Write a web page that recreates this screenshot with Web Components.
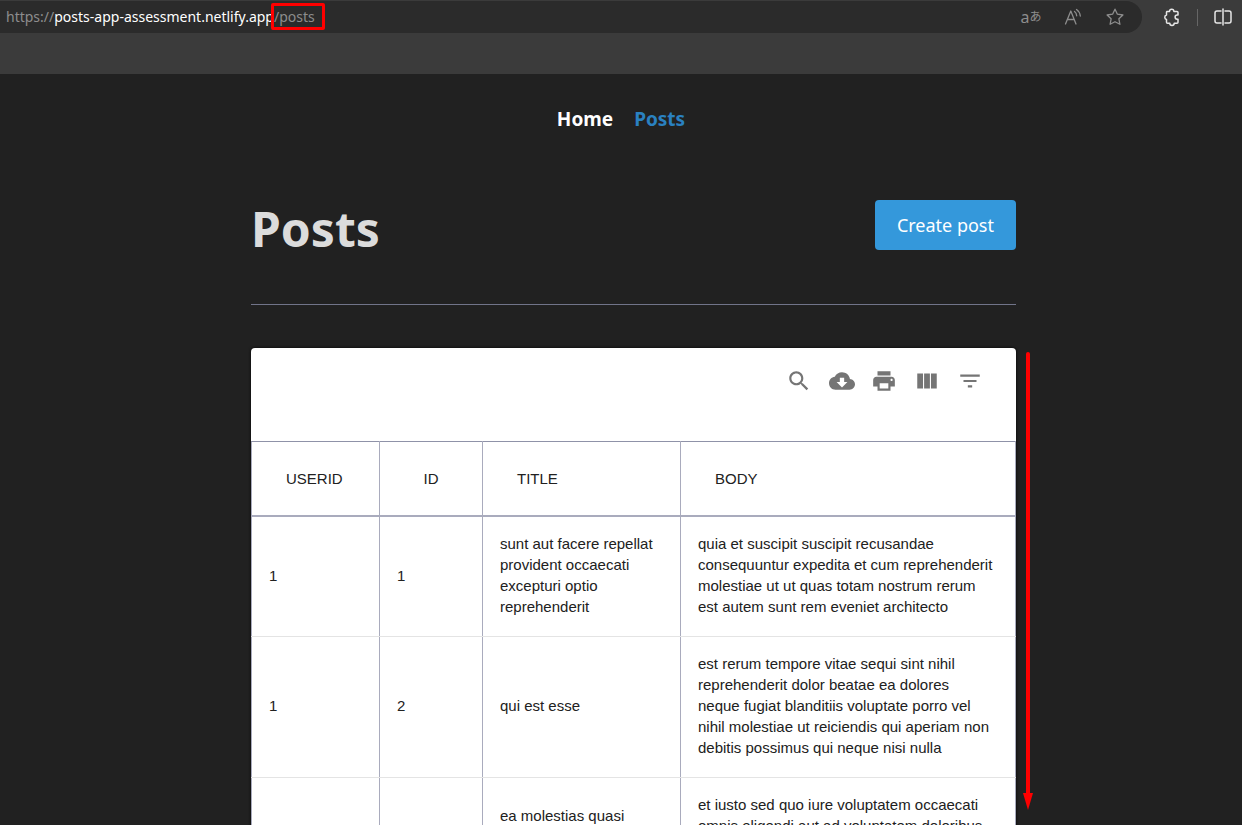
<!DOCTYPE html>
<html lang="en">
<head>
<meta charset="utf-8">
<title>Posts</title>
<style>
html{scrollbar-width:none;background:#212121}
body{margin:0;font-family:"Noto Sans",sans-serif}
</style>
</head>
<body>
<address-bar></address-bar>
<site-nav></site-nav>
<posts-page>
  <span slot="title">Posts</span>
  <span slot="action">Create post</span>
  <posts-card></posts-card>
</posts-page>

<template id="t-address">
<style>
:host{display:flex;align-items:flex-start;background:#3b3b3b;height:74px}
.field{flex:1;display:flex;align-items:center;justify-content:space-between;height:32px;margin-top:1px;padding:0 16px 0 6px;background:#2b2b2b;border-radius:0 16px 16px 0;box-sizing:border-box}
.url{font:14px/20px "Noto Sans",sans-serif;color:#8d8d8d;white-space:nowrap}
.host{color:#fff}
.path{position:relative}
.path::after{content:"";position:absolute;inset:-4px -10px -4px -3px;border:3px solid #f00;border-radius:2px}
.icons,.outer{display:flex;align-items:center}
button{display:flex;align-items:center;justify-content:center;padding:0;border:0;background:none;color:#8d8d8d;height:24px}
.icons{gap:20px}
.icons button{width:22px}
.tr{font:16px/20px "Noto Sans","Noto Sans CJK JP",sans-serif}
.tr small{font-size:12px}
.outer{width:100px;height:32px;margin-top:1px;box-sizing:border-box;padding-left:20px}
.outer button{color:#e6e6e6;width:20px}
.sep{width:1px;height:17px;background:#666;margin:0 15px}
svg{display:block;fill:none;stroke:currentColor;stroke-width:1.3;stroke-linejoin:round;stroke-linecap:round}
</style>
<div class="field">
  <div class="url">https://<span class="host">posts-app-assessment.netlify.app</span><span class="path">/posts</span></div>
  <div class="icons">
    <button class="tr" aria-label="Translate">a<small>あ</small></button>
    <button aria-label="Read aloud"><svg width="20" height="20" viewBox="0 0 20 20"><path d="M2.500 17 7.800 4 13 17M4.300 12.500h7M11.500 4.500q2 1.500 2.200 4.300M13.500 2.500q3.300 2.200 3.800 6.500"/></svg></button>
    <button aria-label="Favourite"><svg width="20" height="20" viewBox="0 0 20 20"><path d="M10 2.200 12.400 7.200 17.900 8 13.900 11.800 14.900 17.300 10 14.700 5.100 17.300 6.100 11.800 2.100 8 7.600 7.200Z"/></svg></button>
  </div>
</div>
<div class="outer">
  <button aria-label="Extensions"><svg width="20" height="20" viewBox="0 0 20 20" style="stroke-width:1.500"><path d="M5 4.500H7.500a2.200 2.200 0 0 1 4.400 0H15a1 1 0 0 1 1 1V8h-.8a2 2 0 0 0 0 4.200h.8v3a1 1 0 0 1-1 1H12.200a2.200 2.200 0 0 1-4.400 0H5.500a1 1 0 0 1-1-1V12.400a2.200 2.200 0 0 1 0-4.300V5.500a1 1 0 0 1 .5-1Z"/></svg></button>
  <span class="sep"></span>
  <button aria-label="Split screen"><svg width="20" height="20" viewBox="0 0 20 20" style="stroke-width:1.500"><path d="M8 4H4a2 2 0 0 0-2 2v8a2 2 0 0 0 2 2h4M10 2v16M12 4h4a2 2 0 0 1 2 2v8a2 2 0 0 1-2 2h-4"/></svg></button>
</div>
</template>

<template id="t-nav">
<style>
:host{display:block;padding:30px 0}
nav{display:flex;justify-content:center;gap:21px;font-size:19px;line-height:30px;font-weight:700}
a{color:#fff;text-decoration:none}
a[aria-current]{color:#2a81c1}
</style>
<nav><a href="#home">Home</a><a href="#posts" aria-current="page">Posts</a></nav>
</template>

<template id="t-page">
<style>
:host{display:block;padding:36px 226px 0 251px}
header{display:flex;justify-content:space-between;align-items:flex-start;height:104px;border-bottom:1px solid #717489;margin-bottom:43px}
h1{margin:0;font-size:48px;line-height:58px;font-weight:700;color:#dcdcdc}
button{font:18px/26px "Noto Sans",sans-serif;color:#fff;background:#3498db;border:0;border-radius:4px;padding:12px 22px;white-space:nowrap}
</style>
<main>
<header><h1><slot name="title"></slot></h1><button><slot name="action"></slot></button></header>
<slot></slot>
</main>
</template>

<template id="t-toolbar">
<style>
:host{display:flex;justify-content:flex-end;padding:12px 25px 39px}
div{display:grid;grid-template-columns:repeat(5,1fr);width:213px}
button{height:42px;padding:0;border:0;background:none;color:#757575;display:flex;align-items:center;justify-content:center}
svg{width:26px;height:26px;fill:currentColor}
</style>
<div role="toolbar" aria-label="Table actions">
<button aria-label="Search"><svg viewBox="0 0 24 24"><path d="M15.500 14h-.79l-.28-.27C15.410 12.590 16 11.110 16 9.500 16 5.910 13.090 3 9.500 3S3 5.910 3 9.500 5.910 16 9.500 16c1.610 0 3.090-.59 4.230-1.570l.27.28v.79l5 4.990L20.490 19l-4.990-5zm-6 0C7.010 14 5 11.990 5 9.500S7.010 5 9.500 5 14 7.010 14 9.500 11.990 14 9.500 14z"/></svg></button>
<button aria-label="Download"><svg viewBox="0 0 24 24"><path d="M19.350 10.040C18.670 6.590 15.640 4 12 4 9.110 4 6.600 5.640 5.350 8.040 2.340 8.360 0 10.910 0 14c0 3.310 2.690 6 6 6h13c2.760 0 5-2.240 5-5 0-2.640-2.050-4.780-4.650-4.960zM17 13l-5 5-5-5h3V9h4v4h3z"/></svg></button>
<button aria-label="Print"><svg viewBox="0 0 24 24"><path d="M19 8H5c-1.660 0-3 1.340-3 3v6h4v4h12v-4h4v-6c0-1.660-1.340-3-3-3zm-3 11H8v-5h8v5zm3-7c-.55 0-1-.45-1-1s.45-1 1-1 1 .45 1 1-.45 1-1 1zm-1-9H6v4h12V3z"/></svg></button>
<button aria-label="View columns"><svg viewBox="0 0 24 24"><path d="M14.670 5v14H9.330V5h5.340zm1 14H21V5h-5.330v14zm-7.340 0V5H3v14h5.330z"/></svg></button>
<button aria-label="Filter"><svg viewBox="0 0 24 24"><path d="M10 18h4v-2h-4v2zM3 6v2h18V6H3zm3 7h12v-2H6v2z"/></svg></button>
</div>
</template>

<template id="t-card">
<style>
:host{display:block;position:relative}
.paper{background:#fff;border-radius:4px;box-shadow:0 0 3px #000}
table{width:100%;border-collapse:collapse;table-layout:fixed;font:15px/21px "Liberation Sans",Arial,sans-serif;color:#212121}
.c1{width:128px}.c2{width:103px}.c3{width:198px}
th,td{border-left:1px solid #a9abbd;border-right:1px solid #a9abbd;text-align:left;vertical-align:middle}
th{border-top:1px solid #8f92a8;border-bottom:2px solid #a9abbd;font-weight:400;padding:17px 17px 16px}
th button{font:inherit;line-height:24px;color:inherit;background:none;border:0;padding:8px 17px;min-width:68px}
td{padding:16px 17px 19px;border-bottom:1px solid #e4e4e4}
td:last-child{padding-right:22px}
.arrow{position:absolute;top:4px;right:-17px;width:10px;height:458px;display:flex;flex-direction:column;align-items:center}
.arrow::before{content:"";flex:1;width:4px;background:#f00;border-radius:2px 2px 0 0}
.arrow::after{content:"";width:10px;height:17px;background:#f00;clip-path:polygon(0 0,100% 0,50% 100%)}
</style>
<div class="paper">
<table-toolbar></table-toolbar>
<table>
<colgroup><col class="c1"><col class="c2"><col class="c3"><col></colgroup>
<thead><tr><th scope="col"><button>USERID</button></th><th scope="col"><button>ID</button></th><th scope="col"><button>TITLE</button></th><th scope="col"><button>BODY</button></th></tr></thead>
<tbody></tbody>
</table>
</div>
<div class="arrow"></div>
</template>

<script>
const stamp = (host, id) => {
  const root = host.attachShadow({mode: "open"});
  root.append(document.getElementById(id).content.cloneNode(true));
  return root;
};
const posts = [
  [1, 1, "sunt aut facere repellat provident occaecati excepturi optio reprehenderit", "quia et suscipit suscipit recusandae consequuntur expedita et cum reprehenderit molestiae ut ut quas totam nostrum rerum est autem sunt rem eveniet architecto"],
  [1, 2, "qui est esse", "est rerum tempore vitae sequi sint nihil reprehenderit dolor beatae ea dolores neque fugiat blanditiis voluptate porro vel nihil molestiae ut reiciendis qui aperiam non debitis possimus qui neque nisi nulla"],
  [1, 3, "ea molestias quasi exercitationem repellat qui ipsa sit aut", "et iusto sed quo iure voluptatem occaecati omnis eligendi aut ad voluptatem doloribus vel accusantium quis pariatur molestiae porro eius odio et labore et velit aut"]
];
customElements.define("address-bar", class extends HTMLElement {
  constructor() { super(); stamp(this, "t-address"); }
});
customElements.define("site-nav", class extends HTMLElement {
  constructor() { super(); stamp(this, "t-nav"); }
});
customElements.define("posts-page", class extends HTMLElement {
  constructor() { super(); stamp(this, "t-page"); }
});
customElements.define("table-toolbar", class extends HTMLElement {
  constructor() { super(); stamp(this, "t-toolbar"); }
});
customElements.define("posts-card", class extends HTMLElement {
  constructor() {
    super();
    const body = stamp(this, "t-card").querySelector("tbody");
    for (const post of posts) {
      const row = body.insertRow();
      for (const value of post) row.insertCell().textContent = value;
    }
  }
});
</script>
</body>
</html>
